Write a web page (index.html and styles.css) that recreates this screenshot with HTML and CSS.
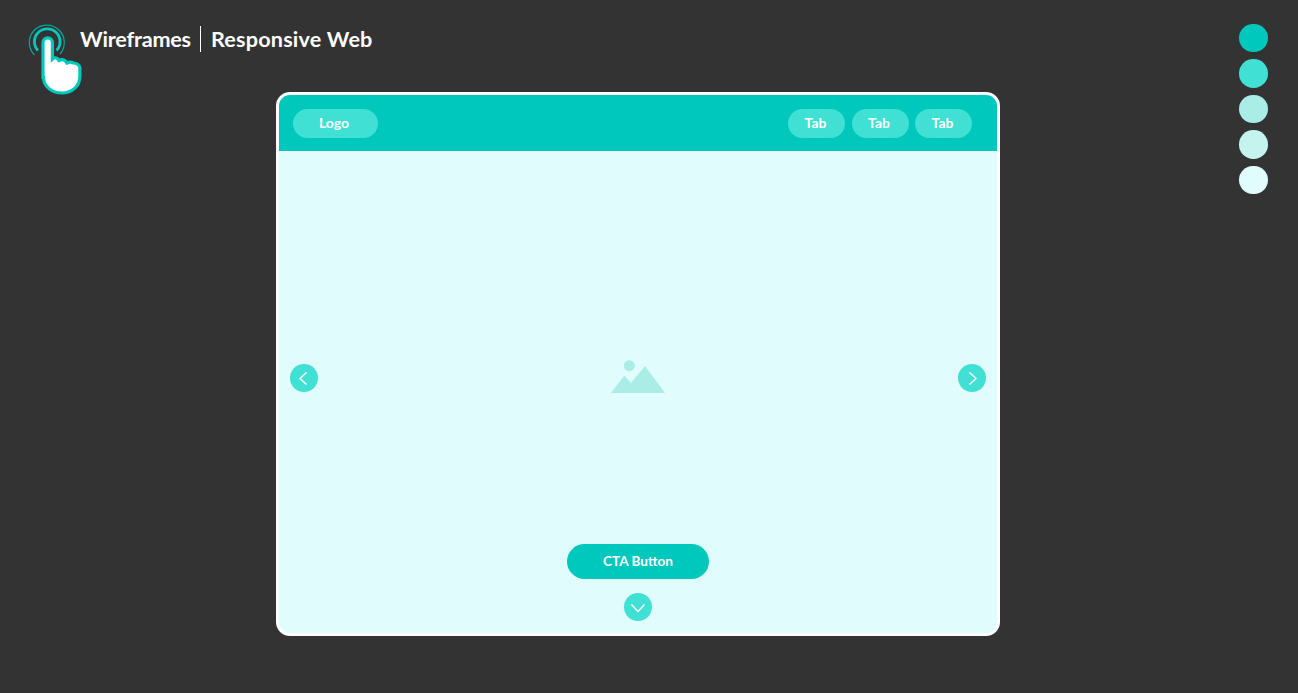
FILE: index.html
```html
<!DOCTYPE html>
<html lang="en">
<head>
    <meta charset="UTF-8" />
    <title>Wireframes | Responsive Web</title>
    <link rel="stylesheet" href="styles.css">
</head>
<body>
    <div class="page">
        <div class="brand">
            <svg class="brand-icon" viewBox="25 20 60 78" width="60" height="78">
                <path d="M34.5 55 A17.5 17.5 0 1 1 60 54" fill="none" stroke="#00a99d" stroke-width="1.2" />
                <path d="M38 50.5 A12.8 12.8 0 1 1 56.5 50.5" fill="none" stroke="#00c8bc" stroke-width="2.8" />
                <path d="M43 77.5 V42.5 a4.7 4.7 0 0 1 9.4 0 V59 c1.5 -1.5 4 -1.5 5.5 0 l1 1.5 c2 -1 5 -1 7 1 l1 1.5 c2 -1 4.5 -1 6.5 0 c3 0 6.5 2 6.5 5 V76 c0 10.5 -8 17 -18 17 c-10 0 -18.4 -6.5 -18.4 -15.5 z" fill="#fff" stroke="#00c8bc" stroke-width="3.2" />
            </svg>
            <div class="brand-title">
                <span class="brand-first">Wireframes</span>
                <span class="brand-divider"></span>
                <span class="brand-second">Responsive Web</span>
            </div>
        </div>

        <div class="frame">
            <div class="frame-header">
                <div class="pill logo-pill">Logo</div>
                <div class="tabs">
                    <div class="pill tab-pill">Tab</div>
                    <div class="pill tab-pill">Tab</div>
                    <div class="pill tab-pill">Tab</div>
                </div>
            </div>
            <div class="frame-body">
                <div class="hero">
                    <div class="round-btn">
                        <svg viewBox="0 0 28 28" width="28" height="28"><path d="M16.5 8.5 L10 14.5 L16.5 20.5" class="chevron" /></svg>
                    </div>
                    <svg class="image-icon" viewBox="0 0 54 34" width="54" height="34">
                        <circle cx="18.3" cy="5.7" r="5.5" fill="#a9ede6" />
                        <path d="M0 33 L13.3 15.7 L20 23 L34 6 L54 33 Z" fill="#a9ede6" />
                    </svg>
                    <div class="round-btn">
                        <svg viewBox="0 0 28 28" width="28" height="28"><path d="M11.5 8.5 L18 14.5 L11.5 20.5" class="chevron" /></svg>
                    </div>
                </div>
                <div class="cta-area">
                    <div class="cta-btn">CTA Button</div>
                    <div class="round-btn">
                        <svg viewBox="0 0 28 28" width="28" height="28"><path d="M7.5 11.5 L14 18.5 L20.5 11.5" class="chevron" /></svg>
                    </div>
                </div>
            </div>
        </div>

        <div class="swatches">
            <div class="swatch swatch-1"></div>
            <div class="swatch swatch-2"></div>
            <div class="swatch swatch-3"></div>
            <div class="swatch swatch-4"></div>
            <div class="swatch swatch-5"></div>
        </div>
    </div>
</body>
</html>
```

FILE: styles.css
```css
html {
    height: 100%;
}
body {
    margin: 0;
    padding: 0;
    height: 100%;
    background: #333333;
    font-family: "Lato", "Liberation Sans", sans-serif;
    overflow: hidden;
}
.page {
    display: grid;
    grid-template-columns: 276px 724px 1fr;
    grid-template-rows: 92px 544px;
}
.brand {
    grid-column: 1 / 3;
    grid-row: 1;
    display: flex;
    align-items: flex-start;
    padding: 20px 0 0 25px;
    height: 72px;
}
.brand-icon {
    flex: none;
}
.brand-title {
    display: flex;
    align-items: center;
    height: 26px;
    margin: 6px 0 0 -5px;
    color: #fff;
    font-size: 21.6px;
    font-weight: 700;
}
.brand-first {
    letter-spacing: -0.2px;
}
.brand-second {
    letter-spacing: 0.2px;
}
.brand-divider {
    width: 1.5px;
    height: 26px;
    margin: 0 9.5px 0 9px;
    background: #fff;
}
.frame {
    grid-column: 2;
    grid-row: 2;
    display: flex;
    flex-direction: column;
    box-sizing: border-box;
    border: 3px solid #fff;
    border-radius: 14px;
    overflow: hidden;
    background: #e0fcfc;
}
.frame-header {
    display: flex;
    align-items: center;
    justify-content: space-between;
    box-sizing: border-box;
    height: 57px;
    padding: 0 25px 0 14px;
    border-bottom: 1px solid #effefe;
    background: #00c8bc;
}
.pill {
    display: flex;
    align-items: center;
    justify-content: center;
    box-sizing: border-box;
    height: 29px;
    padding-bottom: 2px;
    border-radius: 15px;
    background: #40e0d4;
    color: #fff;
    font-size: 14px;
    font-weight: 700;
}
.logo-pill {
    width: 85px;
    padding-right: 3px;
}
.tabs {
    display: flex;
    gap: 6.5px;
}
.tab-pill {
    width: 57px;
    padding-right: 2px;
}
.frame-body {
    flex: 1;
    display: flex;
    flex-direction: column;
}
.hero {
    display: flex;
    align-items: center;
    justify-content: space-between;
    height: 392px;
    padding: 60px 11px 0;
    box-sizing: border-box;
}
.image-icon {
    margin-bottom: 3px;
}
.round-btn {
    width: 28px;
    height: 28px;
    border-radius: 50%;
    background: #40e0d4;
}
.round-btn svg {
    display: block;
}
.chevron {
    fill: none;
    stroke: #fff;
    stroke-width: 1.4;
}
.cta-area {
    display: flex;
    flex-direction: column;
    align-items: center;
    gap: 14px;
}
.cta-btn {
    display: flex;
    align-items: center;
    justify-content: center;
    box-sizing: border-box;
    width: 142px;
    height: 35px;
    padding-bottom: 2px;
    border-radius: 18px;
    background: #00c8bc;
    color: #fff;
    font-size: 13.6px;
    font-weight: 700;
}
.swatches {
    grid-column: 3;
    grid-row: 1 / 3;
    display: flex;
    flex-direction: column;
    align-items: flex-end;
    gap: 7px;
    padding: 24px 30.5px 0 0;
}
.swatch {
    width: 28.4px;
    height: 28.4px;
    border-radius: 50%;
}
.swatch-1 {
    background: #00c8bc;
}
.swatch-2 {
    background: #40e0d4;
}
.swatch-3 {
    background: #a9ede6;
}
.swatch-4 {
    background: #c5f4ef;
}
.swatch-5 {
    background: #e0fcfc;
}
```
